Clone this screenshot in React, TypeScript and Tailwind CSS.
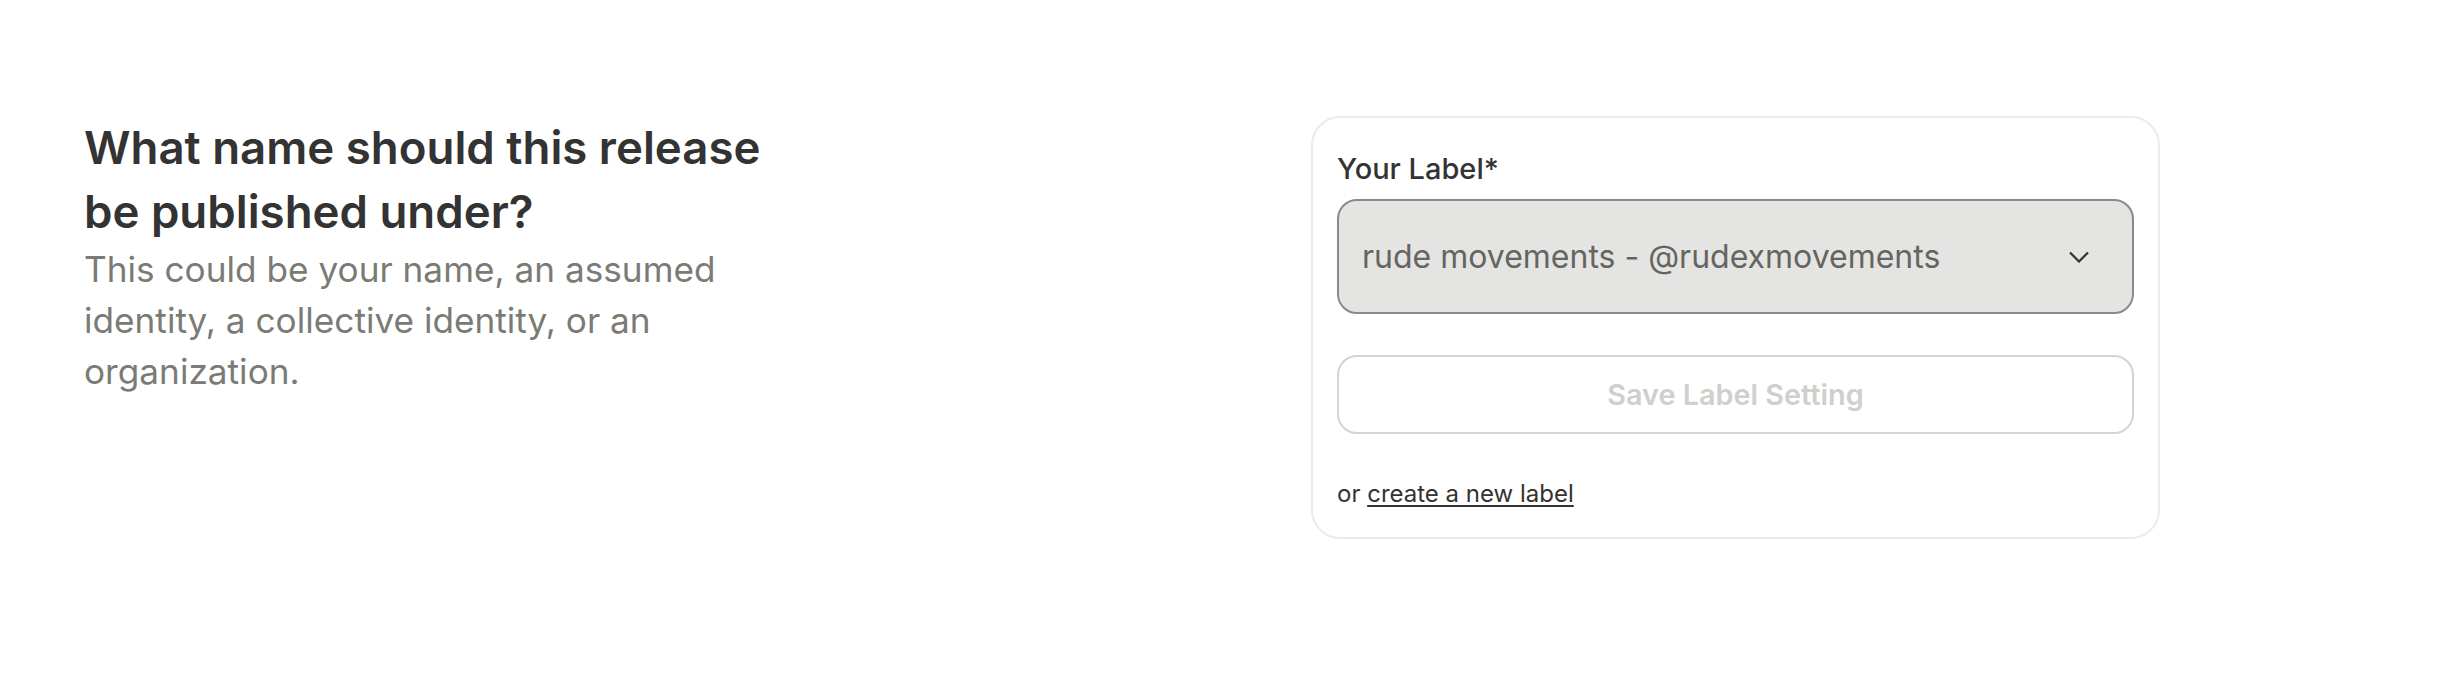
import { ChevronDown } from 'lucide-react'

const font = { fontFamily: 'Inter, "Noto Sans", sans-serif' }

function LabelCard() {
  return (
    <div className="ml-auto mr-[282px] w-[849px] rounded-[29px] border-2 border-[#ebebea] bg-white px-[24px] pt-[33px] pb-[25px]">
      <p className="text-[29px] leading-[36px] font-medium text-[#333333]">Your Label*</p>

      <button
        type="button"
        className="mt-[12px] flex h-[115px] w-full items-center justify-between rounded-[20px] border-2 border-[#8b8b86] bg-[#e4e4e2] pl-[23px] pr-[43px] text-left"
      >
        <span className="text-[32px] leading-[40px] text-[#65655f]">
          rude movements - @rudexmovements
        </span>
        <svg width="20" height="12" viewBox="0 0 20 12" fill="none" className="text-[#333333]">
          <path d="M1 1.5l9 9 9-9" stroke="currentColor" strokeWidth="2.2" />
        </svg>
      </button>

      <button
        type="button"
        disabled
        className="mt-[41px] flex h-[79px] w-full items-center justify-center rounded-[20px] border-2 border-[#d4d4d0] bg-white text-[28.8px] font-semibold text-[#cfcfcb]"
      >
        Save Label Setting
      </button>

      <p className="mt-[42px] text-[24px] leading-[36px] text-[#333333]">
        or{' '}
        <a href="#" className="underline decoration-2 underline-offset-[3px]">
          create a new label
        </a>
      </p>
    </div>
  )
}

export default function App() {
  return (
    <div className="min-h-[684px] bg-white" style={font}>
      <div className="flex items-start pl-[84px] pt-[116px]">
        <div className="w-[715px]">
          <h1 className="text-[45.6px] leading-[64px] font-semibold text-[#333333]">
            What name should this release be published under?
          </h1>
          <p className="text-[35.2px] leading-[51.2px] text-[#7b7b75]">
            This could be your name, an assumed identity, a collective identity, or an
            organization.
          </p>
        </div>
        <LabelCard />
      </div>
    </div>
  )
}
